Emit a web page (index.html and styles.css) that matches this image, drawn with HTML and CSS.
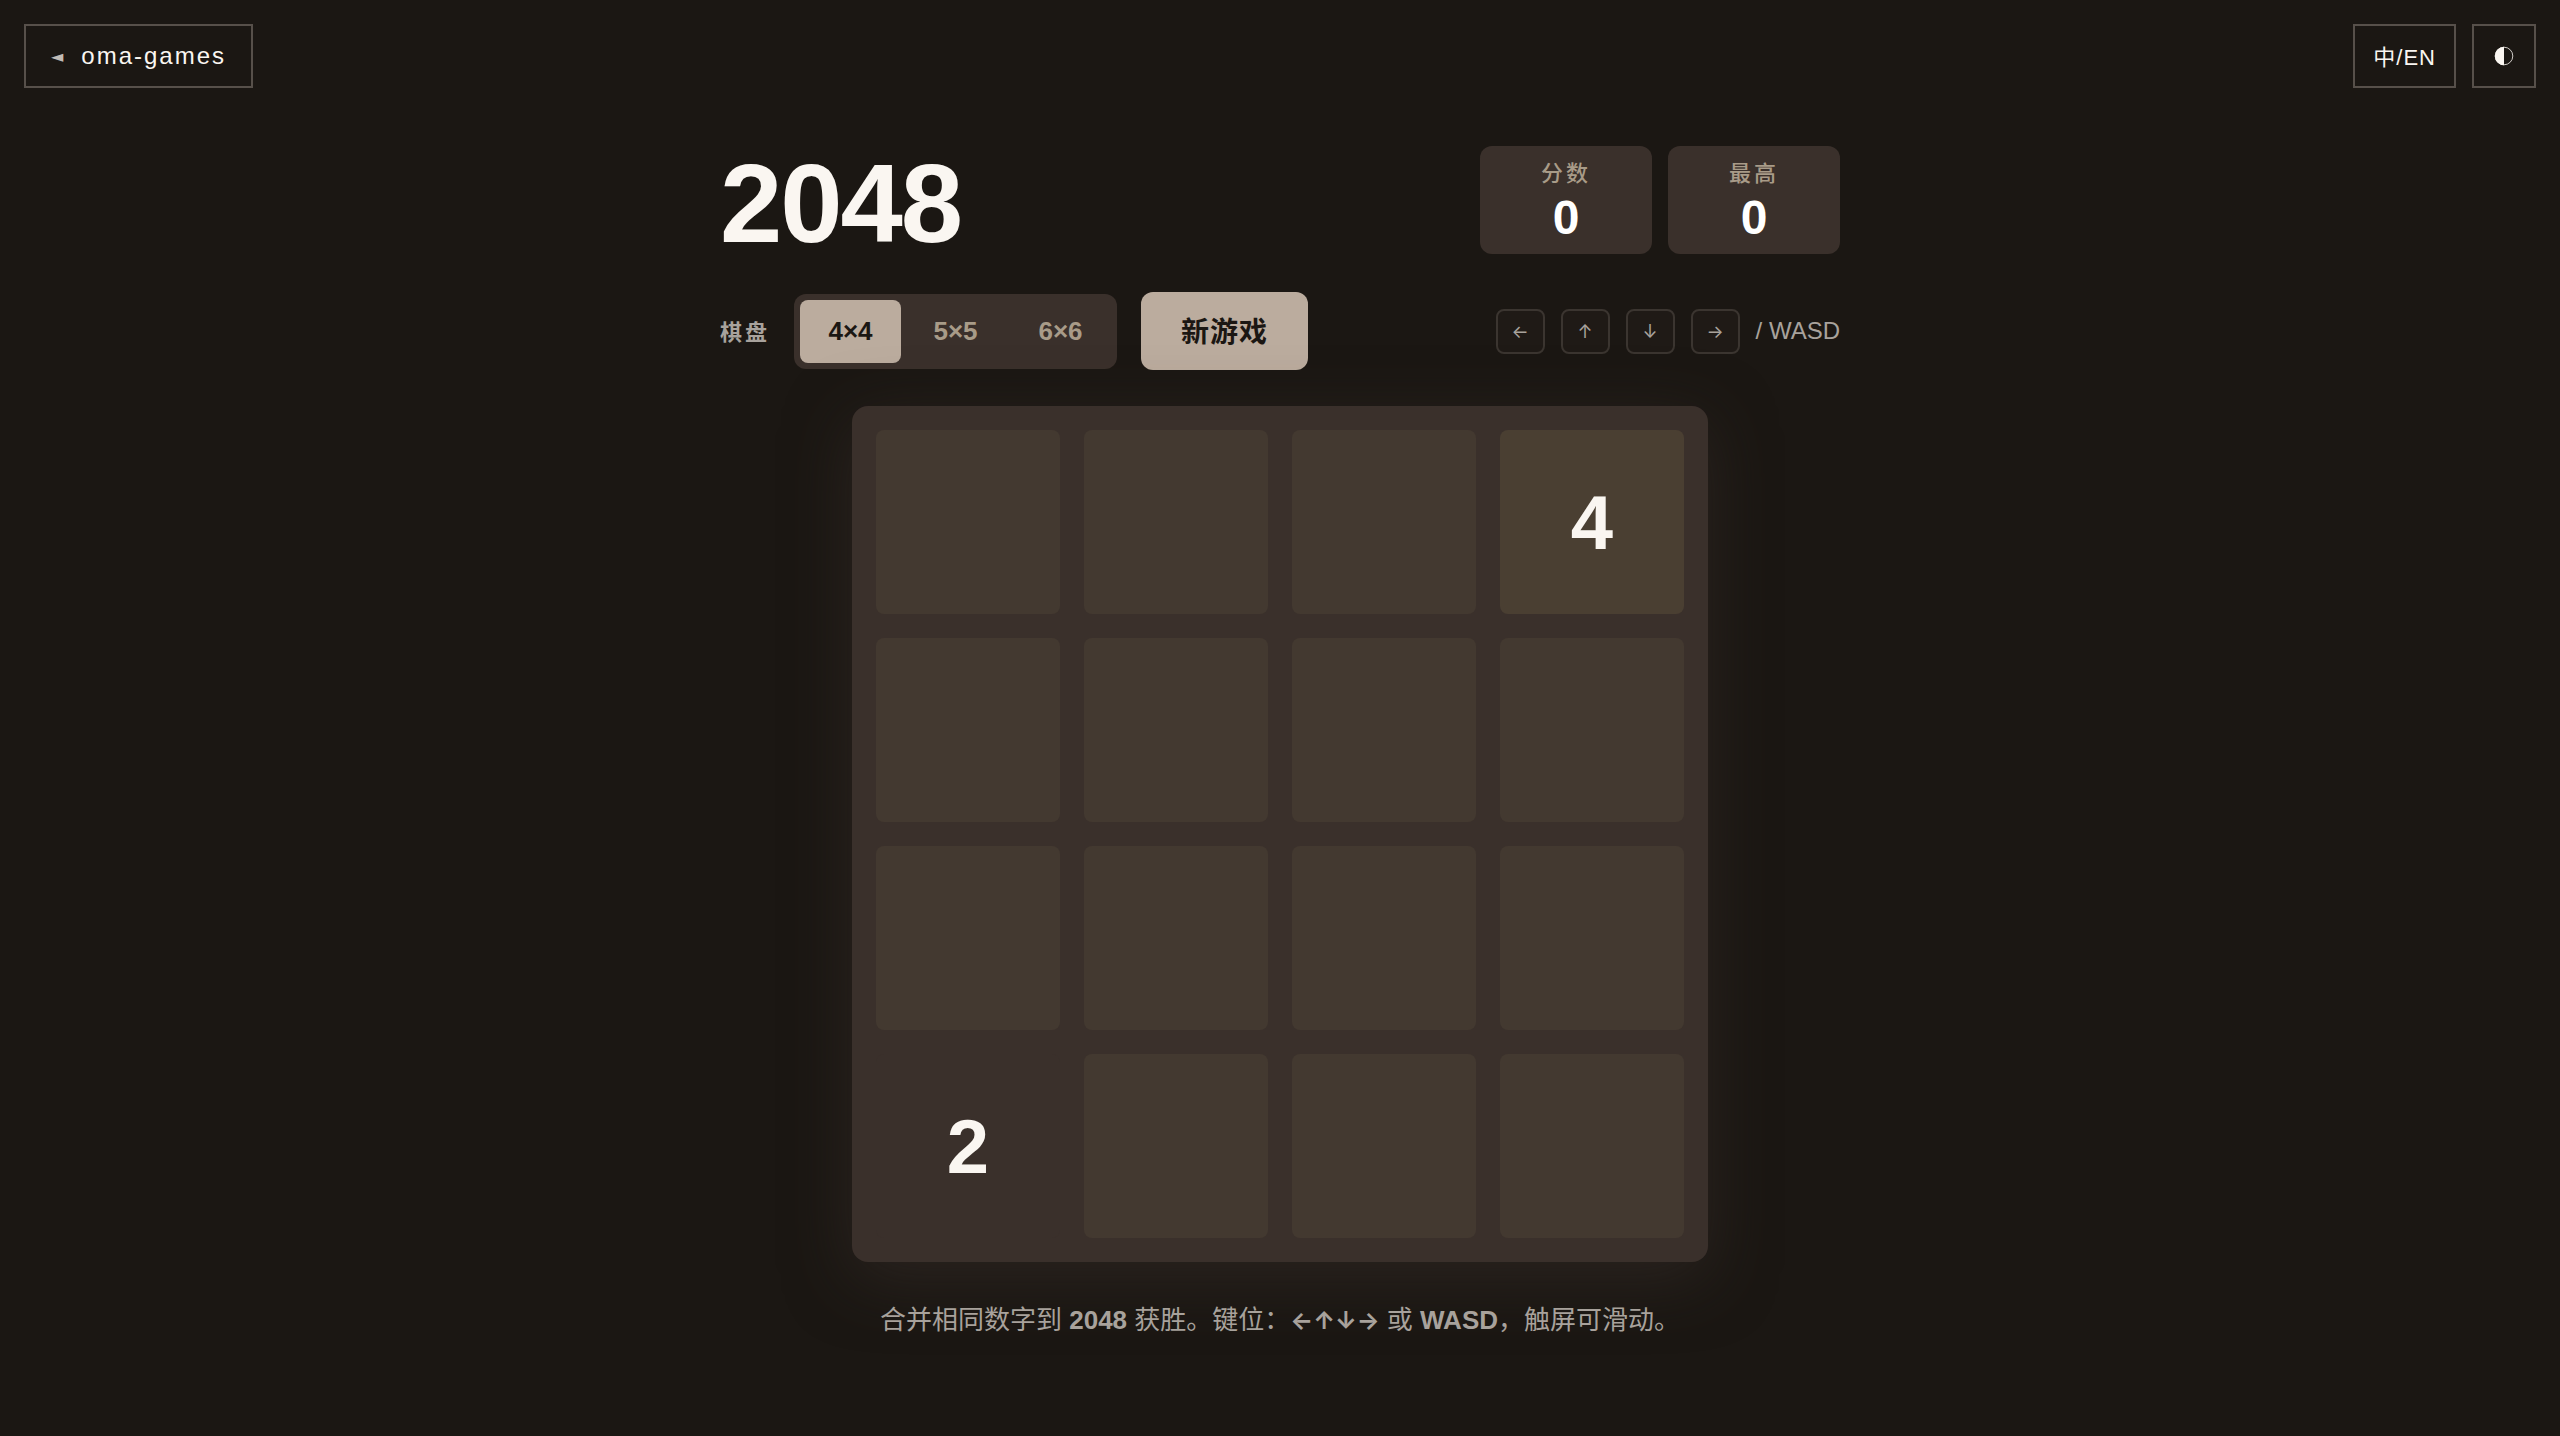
FILE: index.html
```html
<!DOCTYPE html>
<html lang="zh-CN">
<head>
<meta charset="utf-8">
<meta name="viewport" content="width=device-width, initial-scale=1">
<title>2048 · oma-games</title>
<link rel="stylesheet" href="styles.css">
</head>
<body>
<nav class="topbar">
  <a class="chip home" href="#"><span class="home-arrow" aria-hidden="true">◄</span><span>oma-games</span></a>
  <div class="topbar-actions">
    <button class="chip lang" type="button">中/EN</button>
    <button class="chip theme" type="button" aria-label="切换主题">
      <svg class="theme-icon" viewBox="0 0 20 20" aria-hidden="true"><circle cx="10" cy="10" r="8.8" fill="none" stroke="currentColor" stroke-width=".8"/><path d="M10 .8a9.2 9.2 0 0 0 0 18.4z" fill="currentColor"/></svg>
    </button>
  </div>
</nav>
<main class="game">
  <header class="head">
    <h1 class="title">2048</h1>
    <div class="scores">
      <div class="score"><span class="score-label">分数</span><span class="score-value">0</span></div>
      <div class="score"><span class="score-label">最高</span><span class="score-value">0</span></div>
    </div>
  </header>
  <div class="controls">
    <span class="size-label" id="size-label">棋盘</span>
    <div class="sizes" role="group" aria-labelledby="size-label">
      <button class="size active" type="button" aria-pressed="true">4×4</button>
      <button class="size" type="button" aria-pressed="false">5×5</button>
      <button class="size" type="button" aria-pressed="false">6×6</button>
    </div>
    <button class="new-game" type="button">新游戏</button>
    <div class="keys"><kbd>←</kbd><kbd>↑</kbd><kbd>↓</kbd><kbd>→</kbd><span>/ WASD</span></div>
  </div>
  <div class="board">
    <div class="cell"></div><div class="cell"></div><div class="cell"></div><div class="cell tile-4">4</div>
    <div class="cell"></div><div class="cell"></div><div class="cell"></div><div class="cell"></div>
    <div class="cell"></div><div class="cell"></div><div class="cell"></div><div class="cell"></div>
    <div class="cell tile-2">2</div><div class="cell"></div><div class="cell"></div><div class="cell"></div>
  </div>
  <p class="hint">合并相同数字到 <strong>2048</strong> 获胜。键位：<strong class="arrows">←↑↓→</strong> 或 <strong>WASD</strong>，触屏可滑动。</p>
</main>
</body>
</html>
```

FILE: styles.css
```css
:root {
  --bg: #1b1713;
  --text: #faf6f1;
  --muted: #a8a29c;
  --line: #57504a;
  --panel: #3a302b;
  --cell: #433930;
  --tile-4: #4a3f32;
  --accent: #bbac9e;
  --tan: #a89b88;
}

* {
  box-sizing: border-box;
}

body {
  margin: 0;
  min-height: 100vh;
  background: var(--bg);
  color: var(--text);
  font-family: "Liberation Sans", "Noto Sans CJK SC", sans-serif;
}

button {
  font-family: inherit;
  cursor: pointer;
}

.topbar {
  display: flex;
  justify-content: space-between;
  padding: 24px;
}

.topbar-actions {
  display: flex;
  gap: 16px;
}

.chip {
  display: flex;
  align-items: center;
  justify-content: center;
  height: 64px;
  border: 2px solid var(--line);
  background: none;
  color: var(--text);
  text-decoration: none;
}

.home {
  gap: 16px;
  padding: 0 25px;
  font-size: 24px;
  letter-spacing: 2px;
}

.home-arrow {
  font-family: "DejaVu Sans", sans-serif;
  font-size: 16px;
  color: #c1bcb6;
}

.lang {
  padding: 0 18px 2px;
  font-size: 22px;
  letter-spacing: 1px;
}

.theme {
  width: 64px;
  padding: 0;
}

.theme-icon {
  width: 20px;
  height: 20px;
}

.game {
  display: flex;
  flex-direction: column;
  align-items: center;
  max-width: 1120px;
  margin: 0 auto;
  padding: 34px 0 64px;
}

.head {
  display: flex;
  align-items: center;
  justify-content: space-between;
  width: 100%;
  margin-bottom: 38px;
}

.title {
  margin: 0;
  padding-top: 8px;
  font-size: 112px;
  line-height: 100px;
  letter-spacing: -2px;
}

.scores {
  display: flex;
  gap: 16px;
}

.score {
  display: flex;
  flex-direction: column;
  align-items: center;
  width: 172px;
  height: 108px;
  padding: 12px 0;
  border-radius: 12px;
  background: var(--panel);
}

.score-label {
  color: var(--tan);
  font-size: 22px;
  font-weight: 500;
  line-height: 32px;
  letter-spacing: 3px;
}

.score-value {
  color: #fff;
  font-size: 48px;
  font-weight: 700;
  line-height: 56px;
}

.controls {
  display: flex;
  align-items: center;
  width: 100%;
  margin-bottom: 36px;
}

.size-label {
  margin-right: 24px;
  padding-bottom: 2px;
  color: var(--muted);
  font-size: 22px;
  font-weight: 700;
  letter-spacing: 3px;
}

.sizes {
  display: flex;
  gap: 4px;
  margin-right: 24px;
  padding: 6px;
  border-radius: 12px;
  background: var(--panel);
}

.size {
  width: 101px;
  height: 63px;
  padding: 0;
  border: 0;
  border-radius: 8px;
  background: none;
  color: var(--tan);
  font-size: 26px;
  font-weight: 700;
}

.size.active {
  background: var(--accent);
  color: var(--bg);
}

.new-game {
  width: 167px;
  height: 78px;
  padding: 0 0 2px;
  border: 0;
  border-radius: 12px;
  background: var(--accent);
  color: var(--bg);
  font-size: 28px;
  font-weight: 700;
  letter-spacing: 1px;
}

.keys {
  display: flex;
  align-items: center;
  gap: 16px;
  margin-left: auto;
  color: var(--muted);
  font-size: 24px;
}

kbd {
  width: 49px;
  height: 45px;
  border: 2px solid #3b3530;
  border-radius: 8px;
  background: #1f1a16;
  font-family: Inter, sans-serif;
  font-size: 18px;
  line-height: 42px;
  text-align: center;
}

.board {
  display: grid;
  grid-template-columns: repeat(4, 1fr);
  gap: 24px;
  width: 100%;
  max-width: 856px;
  padding: 24px;
  border-radius: 16px;
  background: var(--panel);
  box-shadow: 0 16px 64px rgba(58, 48, 43, 0.5);
}

.cell {
  display: flex;
  align-items: center;
  justify-content: center;
  aspect-ratio: 1;
  border-radius: 8px;
  background: var(--cell);
  font-size: 76px;
  font-weight: 700;
}

.tile-2 {
  background: var(--panel);
}

.tile-4 {
  background: var(--tile-4);
}

.hint {
  margin: 36px 0 0;
  color: var(--muted);
  font-size: 26px;
  line-height: 44px;
}

.arrows {
  font-family: Inter, sans-serif;
  font-size: 24px;
}
```
